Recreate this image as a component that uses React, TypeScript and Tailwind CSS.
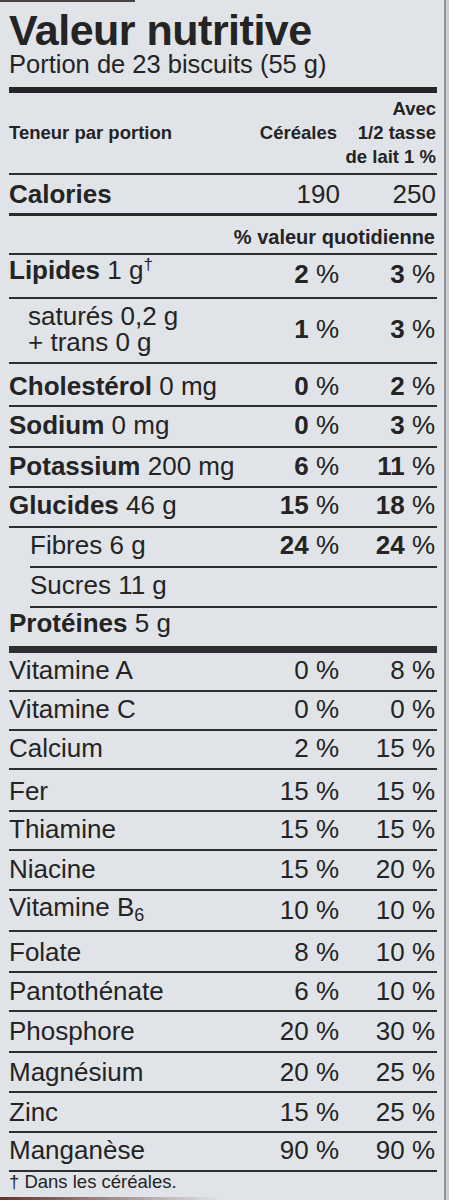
import React from "react";

type Cell = React.ReactNode;

function Pct({ n, bold }: { n: string; bold?: boolean }) {
  return (
    <span>
      <span className={bold ? "font-bold" : ""}>{n}</span> %
    </span>
  );
}

function Row({
  label,
  v1,
  v2,
  h,
  pb,
  border = "border-b-2",
  indent = "",
}: {
  label: Cell;
  v1?: Cell;
  v2?: Cell;
  h: string;
  pb: string;
  border?: string;
  indent?: string;
}) {
  return (
    <div className={`flex items-end ${h} ${pb} ${border} ${indent} border-[#2e2e2e] text-[26px] leading-[30px]`}>
      <div className="flex-1 whitespace-nowrap">{label}</div>
      <div className="w-[100px] pr-[2px] text-right whitespace-nowrap">{v1}</div>
      <div className="w-[96px] pr-[2px] text-right whitespace-nowrap">{v2}</div>
    </div>
  );
}

const vitamins: [Cell, string, string, string][] = [
  ["Vitamine A", "0", "8", "h-[38.5px]"],
  ["Vitamine C", "0", "0", "h-[39px]"],
  ["Calcium", "2", "15", "h-[39px]"],
  ["Fer", "15", "15", "h-[42.5px]"],
  ["Thiamine", "15", "15", "h-[38.5px]"],
  ["Niacine", "15", "20", "h-[40px]"],
  [
    <span>
      Vitamine B<span className="text-[18px] relative top-[5px]">6</span>
    </span>,
    "10",
    "10",
    "h-[41px]",
  ],
  ["Folate", "8", "10", "h-[41.5px]"],
  ["Pantothénate", "6", "10", "h-[39px]"],
  ["Phosphore", "20", "30", "h-[40.5px]"],
  ["Magnésium", "20", "25", "h-[40.5px]"],
  ["Zinc", "15", "25", "h-[40px]"],
  ["Manganèse", "90", "90", "h-[38.5px]"],
];

export default function App() {
  return (
    <div className="w-[449px] h-[1200px] bg-[#e0e3e8] flex overflow-hidden font-['Liberation_Sans',Arial,sans-serif] text-[#242424]">
      <div className="flex-1 flex flex-col">
        <div className="h-[2px] w-[135px] bg-[#4a4343]" />
        <div className="pl-[9px] pr-[7px] flex flex-col">
          <div className="pt-[8px] text-[43px] leading-[41px] font-bold tracking-[-0.5px] whitespace-nowrap">
            Valeur nutritive
          </div>
          <div className="text-[25.5px] leading-[26px] whitespace-nowrap">Portion de 23 biscuits (55 g)</div>
          <div className="mt-[10px] h-[6px] bg-[#262626]" />

          {/* header */}
          <div className="flex items-center h-[81.5px] border-b-2 border-[#2e2e2e] text-[18.5px] leading-[24px] font-bold">
            <div className="flex-1 whitespace-nowrap">Teneur par portion</div>
            <div className="w-[100px] pr-[4px] text-right whitespace-nowrap">Céréales</div>
            <div className="w-[96px] pr-[1px] text-right whitespace-nowrap flex flex-col">
              <span>Avec</span>
              <span>1/2 tasse</span>
              <span>de lait 1 %</span>
            </div>
          </div>

          {/* calories */}
          <div className="flex items-center h-[41.5px] border-b-[3px] border-[#2a2a2a] text-[26px] leading-[30px]">
            <div className="flex-1 font-bold">Calories</div>
            <div className="w-[100px] pr-[1px] text-right">190</div>
            <div className="w-[96px] pr-[1px] text-right">250</div>
          </div>

          {/* % DV */}
          <div className="flex items-end justify-end h-[38.5px] pb-[5px] pr-[2px] border-b-2 border-[#2e2e2e] text-[20px] leading-[22px] font-bold whitespace-nowrap">
            % valeur quotidienne
          </div>

          <Row
            h="h-[44px]"
            pb="pb-[8px]"
            label={
              <span>
                <span className="font-bold">Lipides</span> 1 g
                <span className="text-[17px] relative -top-[9px]">†</span>
              </span>
            }
            v1={<Pct n="2" bold />}
            v2={<Pct n="3" bold />}
          />

          <div className="flex h-[65.5px] border-b-2 border-[#2e2e2e] text-[26px]">
            <div className="flex-1 pl-[19px] pt-[4px] leading-[26px] whitespace-nowrap">
              <div>saturés 0,2 g</div>
              <div>+ trans 0 g</div>
            </div>
            <div className="w-[100px] pr-[2px] pt-[15px] text-right leading-[30px] whitespace-nowrap">
              <Pct n="1" bold />
            </div>
            <div className="w-[96px] pr-[2px] pt-[15px] text-right leading-[30px] whitespace-nowrap">
              <Pct n="3" bold />
            </div>
          </div>

          <Row
            h="h-[42.5px]"
            pb="pb-[4px]"
            label={
              <span>
                <span className="font-bold">Cholestérol</span> 0 mg
              </span>
            }
            v1={<Pct n="0" bold />}
            v2={<Pct n="2" bold />}
          />
          <Row
            h="h-[41px]"
            pb="pb-[5.5px]"
            label={
              <span>
                <span className="font-bold">Sodium</span> 0 mg
              </span>
            }
            v1={<Pct n="0" bold />}
            v2={<Pct n="3" bold />}
          />
          <Row
            h="h-[40px]"
            pb="pb-[5px]"
            label={
              <span>
                <span className="font-bold">Potassium</span> 200 mg
              </span>
            }
            v1={<Pct n="6" bold />}
            v2={<Pct n="11" bold />}
          />
          <Row
            h="h-[40.5px]"
            pb="pb-[6px]"
            label={
              <span>
                <span className="font-bold">Glucides</span> 46 g
              </span>
            }
            v1={<Pct n="15" bold />}
            v2={<Pct n="18" bold />}
          />
          <Row
            h="h-[39.5px]"
            pb="pb-[6px]"
            indent="ml-[21px]"
            label="Fibres 6 g"
            v1={<Pct n="24" bold />}
            v2={<Pct n="24" bold />}
          />
          <Row h="h-[40.5px]" pb="pb-[6.5px]" indent="ml-[21px]" label="Sucres 11 g" />
          <Row
            h="h-[45px]"
            pb="pb-[8px]"
            border="border-b-[7px]"
            label={
              <span>
                <span className="font-bold">Protéines</span> 5 g
              </span>
            }
          />

          {vitamins.map(([label, a, b, h], i) => (
            <Row key={i} h={h} pb="pb-[4.5px]" label={label} v1={<Pct n={a} />} v2={<Pct n={b} />} />
          ))}

          <div className="text-[18.5px] leading-[20px] whitespace-nowrap">† Dans les céréales.</div>
        </div>
        <div className="flex-1" />
        <div className="h-[3px] w-[220px] bg-linear-to-r from-[#5e3430] to-transparent" />
      </div>
      <div className="w-[2px] bg-[#8f9398]" />
      <div className="w-[3px] bg-[#c9cdd2]" />
    </div>
  );
}
